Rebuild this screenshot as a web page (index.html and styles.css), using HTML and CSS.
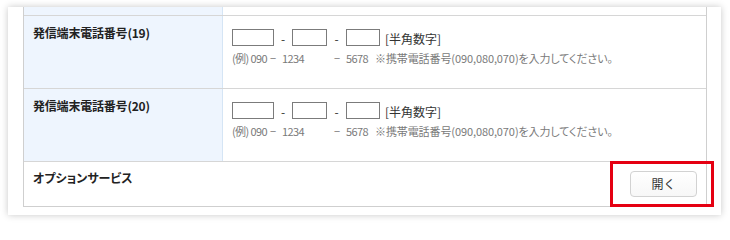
FILE: index.html
```html
<!DOCTYPE html>
<html lang="ja">
<head>
<meta charset="utf-8">
<title>発信端末電話番号</title>
<link rel="stylesheet" href="styles.css">
</head>
<body>
<div class="card">
  <div class="table">
    <div class="row stub">
      <div class="label"></div>
      <div class="value"></div>
    </div>
    <div class="row">
      <div class="label">発信端末電話番号(19)</div>
      <div class="value">
        <div class="inputs">
          <span class="box w1"></span><span class="dash">-</span><span class="box w2"></span><span class="dash d2">-</span><span class="box w3"></span><span class="hint">[半角数字]</span>
        </div>
        <div class="example">
          <span class="e1">(例) 090</span><span class="e2">−</span><span class="e3">1234</span><span class="e4">−</span><span class="e5">5678</span><span class="note">※携帯電話番号(090,080,070)を入力してください。</span>
        </div>
      </div>
    </div>
    <div class="row">
      <div class="label">発信端末電話番号(20)</div>
      <div class="value">
        <div class="inputs">
          <span class="box w1"></span><span class="dash">-</span><span class="box w2"></span><span class="dash d2">-</span><span class="box w3"></span><span class="hint">[半角数字]</span>
        </div>
        <div class="example">
          <span class="e1">(例) 090</span><span class="e2">−</span><span class="e3">1234</span><span class="e4">−</span><span class="e5">5678</span><span class="note">※携帯電話番号(090,080,070)を入力してください。</span>
        </div>
      </div>
    </div>
    <div class="option">
      <div class="opt-label">オプションサービス</div>
      <button class="btn" type="button">開く</button>
    </div>
  </div>
</div>
<div class="highlight"></div>
</body>
</html>
```

FILE: styles.css
```css
html, body {
  margin: 0;
  padding: 0;
  background: #fff;
}
body {
  font-family: "Noto Sans CJK JP", "Noto Sans", sans-serif;
  color: #222;
  font-size: 12px;
  position: relative;
  width: 730px;
  height: 223px;
  overflow: hidden;
}
.card {
  margin: 7px 0 0 8px;
  width: 713px;
  height: 208px;
  box-sizing: border-box;
  padding: 0 14px 0 15px;
  background: #fff;
  box-shadow: 0 0 7px rgba(0, 0, 0, 0.22);
  overflow: hidden;
}
.table {
  width: 684px;
  box-sizing: border-box;
  border-left: 1px solid #cfcfcf;
  border-right: 1px solid #cfcfcf;
  border-bottom: 1px solid #cfcfcf;
}
.row {
  display: grid;
  grid-template-columns: 199px 1fr;
  border-top: 1px solid #d6d6d6;
}
.row.stub {
  border-top: none;
  height: 8px;
}
.label {
  background: #eef5fe;
  border-right: 1px solid #d5e5f5;
  padding: 9px 0 0 9px;
  font-weight: bold;
  line-height: 16px;
  font-size: 12px;
  letter-spacing: -0.2px;
}
.value {
  padding: 13px 9px 22px 9px;
}
.stub .label, .stub .value {
  padding: 0;
}
.inputs {
  display: flex;
  align-items: center;
  height: 19px;
  margin-bottom: 2px;
}
.box {
  display: block;
  height: 17px;
  box-sizing: border-box;
  border: 1px solid #7b7b7b;
  background: #fff;
  margin-top: -2px;
}
.w1 { width: 42px; }
.w2 { width: 35px; }
.w3 { width: 34px; }
.dash {
  width: 18px;
  text-align: center;
  font-size: 12px;
  line-height: 16px;
  color: #333;
}
.dash.d2 { width: 19px; }
.hint {
  margin-left: 5px;
  font-size: 12px;
  line-height: 16px;
  color: #333;
}
.example {
  display: flex;
  font-size: 11px;
  line-height: 16px;
  color: #7a7a7a;
  white-space: nowrap;
  font-feature-settings: "palt";
}
.e1 { width: 38px; flex-shrink: 0; letter-spacing: -0.6px; }
.e2 { width: 12px; flex-shrink: 0; text-align: left; }
.e3 { width: 52px; flex-shrink: 0; letter-spacing: -0.6px; }
.e4 { width: 12px; flex-shrink: 0; text-align: left; }
.e5 { width: 29px; flex-shrink: 0; letter-spacing: -0.6px; }
.note {
  letter-spacing: -0.1px;
}
.option {
  display: flex;
  justify-content: space-between;
  align-items: flex-start;
  border-top: 1px solid #d6d6d6;
  padding: 9px 9px 9px 9px;
  height: 26px;
}
.opt-label {
  font-weight: bold;
  font-size: 12px;
  line-height: 16px;
  margin-top: -1px;
  font-feature-settings: "palt";
}
.btn {
  width: 67px;
  height: 26px;
  box-sizing: border-box;
  border: 1px solid #d2d2d2;
  border-radius: 4px;
  background: linear-gradient(#ffffff, #f7f7f7);
  font-family: "Noto Sans CJK JP", sans-serif;
  font-size: 12px;
  color: #333;
  padding: 0;
  margin: 0;
  line-height: 24px;
}
.highlight {
  position: absolute;
  left: 610px;
  top: 161px;
  width: 104px;
  height: 46px;
  box-sizing: border-box;
  border: 3px solid #e50012;
}
```
